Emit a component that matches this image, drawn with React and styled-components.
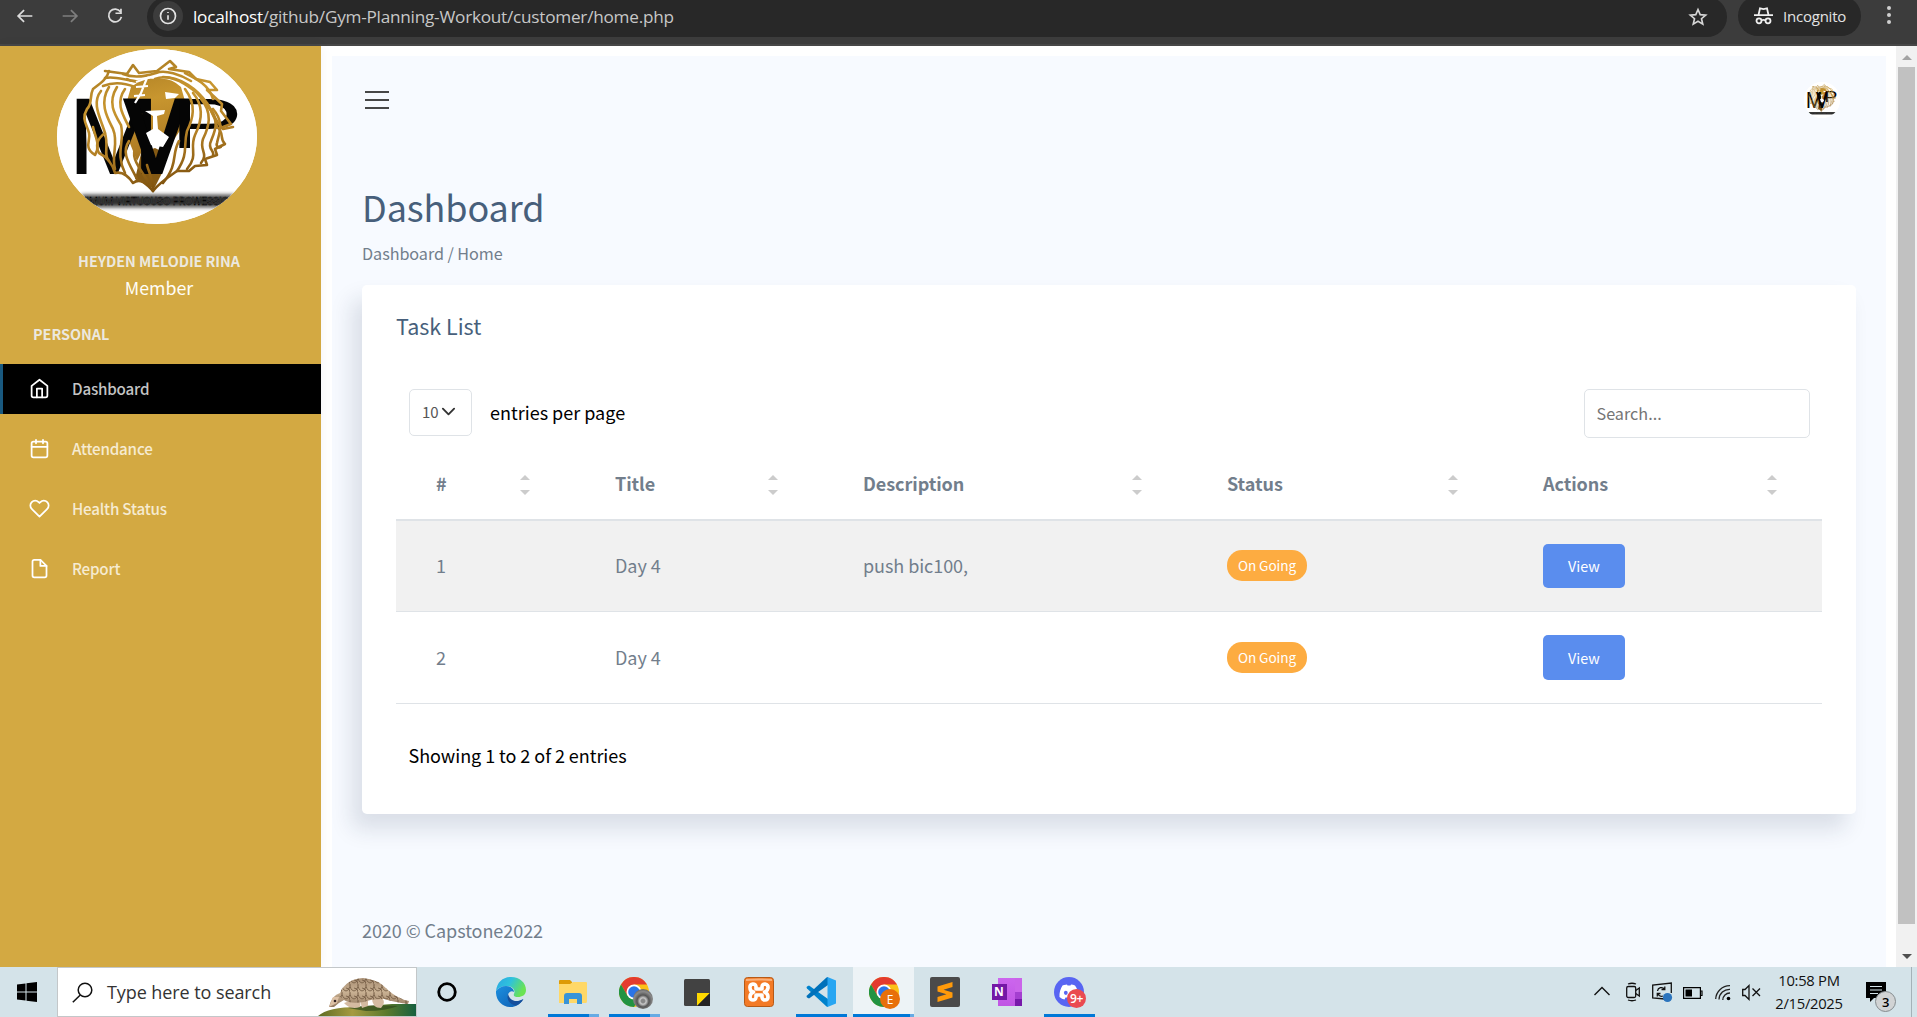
import React from "react";
import styled, { createGlobalStyle } from "styled-components";

const GlobalStyle = createGlobalStyle`
  *, *::before, *::after { box-sizing: border-box; }
  html, body { margin: 0; padding: 0; }
  body {
    width: 1917px;
    height: 1017px;
    overflow: hidden;
    background: #fff;
    font-family: "Noto Sans CJK SC", "Noto Sans", sans-serif;
    font-size: 18px;
  }
  svg { display: block; flex: none; }
`;

const SEGOE = `"Open Sans", "Noto Sans", sans-serif`;

const Screen = styled.div`
  width: 1917px;
  height: 1017px;
  display: flex;
  flex-direction: column;
`;

/* ---------- Browser bar ---------- */

const BrowserBar = styled.header`
  flex: none;
  height: 46px;
  background: #3c3c3c;
  border-bottom: 2px solid #474747;
  display: flex;
  align-items: flex-start;
  overflow: hidden;
  color: #e3e3e3;
  font-family: ${SEGOE};
`;

const NavButtons = styled.div`
  width: 147px;
  height: 32px;
  padding-left: 14px;
  display: flex;
  align-items: center;
  gap: 23px;
`;

const AddressBar = styled.div`
  width: 1580px;
  height: 40px;
  margin-top: -3px;
  padding: 0 18px 0 6px;
  border-radius: 20px;
  background: #282828;
  display: flex;
  align-items: center;
`;

const InfoChip = styled.div`
  width: 30px;
  height: 30px;
  border-radius: 15px;
  background: #3c3c3c;
  display: flex;
  align-items: center;
  justify-content: center;
  margin: -2px 10px 0 0;
`;

const Url = styled.div`
  flex: 1;
  font-size: 17.2px;
  line-height: 36px;
  letter-spacing: -0.24px;
  color: #c7c7c7;
  white-space: nowrap;
  span { color: #fff; }
`;

const IncognitoPill = styled.div`
  width: 123px;
  height: 40px;
  margin: -4px 0 0 11px;
  padding: 0 0 0 16px;
  border-radius: 20px;
  background: #282828;
  display: flex;
  align-items: center;
  gap: 10px;
  font-size: 15px;
  letter-spacing: -0.22px;
`;

const MenuDots = styled.div`
  margin: 6px 0 0 26px;
  display: flex;
  flex-direction: column;
  gap: 3px;
  i { width: 4px; height: 4px; border-radius: 2px; background: #d0d0d0; }
`;

/* ---------- Page shell ---------- */

const Viewport = styled.div`
  flex: none;
  height: 921px;
  display: flex;
`;

const Sidebar = styled.aside`
  width: 321px;
  background: #d3a942;
  display: flex;
  flex-direction: column;
  align-items: center;
  padding-top: 3px;
  box-shadow: 0 0 12px rgba(40, 40, 60, 0.05);
`;

const LogoFrame = styled.div`
  width: ${(p) => p.$w}px;
  height: ${(p) => p.$h}px;
  border-radius: 50%;
  overflow: hidden;
  background: #fff;
  flex: none;
  margin-left: ${(p) => p.$ml || 0}px;
`;

const UserName = styled.div`
  margin: 25px 0 0 -3px;
  font-size: 14.4px;
  line-height: 24px;
  font-weight: 700;
  letter-spacing: -0.06px;
  color: #ece8df;
`;

const UserRole = styled.div`
  margin: 0 0 0 -3px;
  font-size: 17.8px;
  line-height: 28px;
  color: #fffdf6;
`;

const MenuTitle = styled.div`
  align-self: stretch;
  padding-left: 33px;
  margin-top: 21px;
  font-size: 14.4px;
  line-height: 24px;
  font-weight: 700;
  color: #ece8df;
`;

const Menu = styled.nav`
  align-self: stretch;
  margin-top: 18px;
  display: flex;
  flex-direction: column;
  gap: 10px;
`;

const MenuItem = styled.a`
  height: 50px;
  display: flex;
  align-items: center;
  gap: 22px;
  padding-left: 26px;
  border-left: 3px solid ${(p) => (p.$active ? "#19597f" : "transparent")};
  background: ${(p) => (p.$active ? "#000" : "transparent")};
  color: ${(p) => (p.$active ? "#c4c4c4" : "#f6ebd1")};
  font-size: 15.2px;
  font-weight: 500;
  letter-spacing: -0.2px;
  line-height: 24px;
  svg { color: #fff; margin-top: -1px; }
  span { margin-top: -2px; }
`;

const Main = styled.main`
  flex: 1;
  min-width: 0;
  padding: 10px 10px 0 11px;
`;

const Content = styled.div`
  height: 911px;
  background: #f7faff;
  display: flex;
  flex-direction: column;
  padding: 0 30px;
`;

const TopBar = styled.div`
  height: 87px;
  display: flex;
  align-items: center;
  justify-content: space-between;
  padding: 0 16px 0 3px;
`;

const Burger = styled.div`
  display: flex;
  flex-direction: column;
  gap: 6px;
  i { width: 24px; height: 2px; background: #474747; }
`;

const PageTitle = styled.h3`
  margin: 41px 0 0;
  font-size: 36px;
  line-height: 44px;
  font-weight: 400;
  letter-spacing: -0.1px;
  color: #475f7b;
`;

const Breadcrumb = styled.div`
  margin-top: 13px;
  font-size: 16.2px;
  line-height: 24px;
  letter-spacing: -0.06px;
  color: #727e8c;
`;

const Card = styled.section`
  margin-top: 20px;
  height: 529px;
  padding: 24px 34px 0;
  background: #fff;
  border-radius: 5px;
  box-shadow: -10px 15px 22px 0 rgba(25, 42, 70, 0.13);
`;

const CardTitle = styled.h4`
  margin: 0;
  font-size: 21.5px;
  line-height: 34px;
  font-weight: 400;
  color: #475f7b;
`;

const TableTools = styled.div`
  margin-top: 46px;
  height: 50px;
  padding: 0 12px 0 13px;
  display: flex;
  justify-content: space-between;
  align-items: flex-start;
`;

const PerPage = styled.label`
  display: flex;
  gap: 18px;
  line-height: 47px;
  color: #000;
`;

const SelectBox = styled.div`
  width: 63px;
  height: 47px;
  border: 1px solid #dfe3e7;
  border-radius: 5px;
  padding: 0 0 2px 12px;
  display: flex;
  align-items: center;
  gap: 2px;
  font-size: 15px;
  color: #555;
`;

const SearchInput = styled.input`
  width: 226px;
  height: 49px;
  border: 1px solid #dfe3e7;
  border-radius: 5px;
  padding: 0 12px 2px 11.5px;
  font: 16.2px "Noto Sans CJK SC", "Noto Sans", sans-serif;
  background: #fff;
  &::placeholder { color: #757575; opacity: 1; }
`;

const Row = styled.div`
  display: grid;
  grid-template-columns: 179px 248px 364px 316px 319px;
  align-items: center;
  height: ${(p) => p.$h}px;
  padding-top: ${(p) => (p.$head ? 8 : 0)}px;
  background: ${(p) => (p.$striped ? "#f1f1f1" : "transparent")};
  border-bottom: ${(p) => (p.$head ? 2 : 1)}px solid #dfe3e7;
  color: #727e8c;
  font-weight: ${(p) => (p.$head ? 700 : 400)};
`;

const Cell = styled.div`
  height: ${(p) => (p.$head ? 28 : 45)}px;
  padding: 0 45px 0 40px;
  display: flex;
  align-items: ${(p) => (p.$head ? "center" : "flex-start")};
  justify-content: space-between;
  line-height: ${(p) => (p.$head ? 28 : p.$line || 43)}px;
  letter-spacing: -0.06px;
`;

const Sorter = styled.span`
  display: flex;
  flex-direction: column;
  gap: 10px;
  margin: 3px 0 0 0;
  &::before, &::after {
    content: "";
    border: 5px solid transparent;
    border-top-width: 0;
    border-bottom: 5px solid #ccc;
  }
  &::after {
    border-bottom-width: 0;
    border-top: 5px solid #ccc;
  }
`;

const Badge = styled.span`
  width: 80px;
  height: 31px;
  margin-top: ${(p) => (p.$first ? 6 : 7)}px;
  border-radius: 15px;
  background: #fdac41;
  color: #fff;
  font-size: 13.6px;
  line-height: 31px;
  text-align: center;
`;

const ViewButton = styled.button`
  width: 82px;
  height: ${(p) => (p.$first ? 44 : 45)}px;
  border: 0;
  border-radius: 5px;
  background: #5a8dee;
  color: #fff;
  font: 14.4px "Noto Sans CJK SC", "Noto Sans", sans-serif;
  padding: 0;
`;

const TableInfo = styled.div`
  padding: 37px 0 0 12.5px;
  line-height: 28px;
  letter-spacing: -0.05px;
  color: #000;
`;

const Footer = styled.footer`
  margin-top: 102px;
  line-height: 28px;
  letter-spacing: -0.06px;
  color: #727e8c;
`;

const Scrollbar = styled.div`
  width: 21px;
  background: #f1f1f1;
  display: flex;
  flex-direction: column;
  align-items: center;
  justify-content: space-between;
  padding: 9px 0 8px;
`;

const ScrollArrow = styled.i`
  border: 5px solid transparent;
  ${(p) => (p.$up
    ? "border-top: 0; border-bottom: 5px solid #a3a3a3;"
    : "border-bottom: 0; border-top: 5px solid #505050;")}
`;

const Thumb = styled.div`
  width: 17px;
  height: 857px;
  margin: 7px 0 auto;
  background: #c1c1c1;
`;

/* ---------- Taskbar ---------- */

const Taskbar = styled.footer`
  flex: none;
  height: 50px;
  background: #d4e3e9;
  display: flex;
  font-family: ${SEGOE};
  color: #111;
`;

const StartButton = styled.div`
  width: 57px;
  padding: 15px 0 0 17px;
`;

const SearchBox = styled.div`
  width: 360px;
  height: 50px;
  background: #fff;
  border: 1px solid #c3c7c9;
  display: flex;
  align-items: center;
  padding-left: 14px;
  gap: 14px;
  font-size: 18px;
  letter-spacing: -0.08px;
  color: #333;
  white-space: nowrap;
  overflow: hidden;
  > :last-child { margin-left: auto; }
`;

const SearchLabel = styled.span`
  width: 168px;
`;

const Apps = styled.div`
  display: flex;
  padding-left: 3px;
`;

const AppSlot = styled.div`
  width: ${(p) => p.$w || 62}px;
  height: 50px;
  position: relative;
  display: flex;
  align-items: center;
  justify-content: center;
  background: ${(p) => (p.$active ? "#edf3f6" : "transparent")};
`;

const Underline = styled.i`
  position: absolute;
  left: 50%;
  bottom: 0;
  width: 51px;
  height: 3px;
  margin-left: -25px;
  background: ${(p) => (p.$stacked
    ? "linear-gradient(90deg, #0078d7 41px, #66abe4 41px)"
    : "#0078d7")};
  ${(p) => p.$full && "left: 0; margin: 0; width: 61px; background: linear-gradient(90deg, #0078d7 57px, #66abe4 57px);"}
`;

const RoundBadge = styled.span`
  position: absolute;
  left: ${(p) => p.$x}px;
  top: ${(p) => p.$y}px;
  width: ${(p) => p.$s}px;
  height: ${(p) => p.$s}px;
  border-radius: 50%;
  background: ${(p) => p.$bg};
  border: ${(p) => p.$border || "0"};
  color: ${(p) => p.$color || "#fff"};
  font-size: ${(p) => p.$fs || 11}px;
  font-weight: ${(p) => p.$fw || 400};
  letter-spacing: -0.4px;
  display: flex;
  align-items: center;
  justify-content: center;
`;

const Tray = styled.div`
  margin-left: auto;
  display: flex;
  align-items: center;
`;

const Clock = styled.div`
  width: 80px;
  margin: 0 0 0 8px;
  font-size: 14.8px;
  line-height: 23px;
  letter-spacing: -0.3px;
  text-align: center;
  white-space: nowrap;
`;

const Notices = styled.div`
  position: relative;
  width: 63px;
  height: 50px;
  padding: 15px 0 0 17px;
  border-right: 1px solid #a4b2b8;
  margin-right: 5px;
`;

/* ---------- Drawings ---------- */

const STRANDS = [
  "M52 22C50 30 44 34 36 40C32 48 36 54 30 60C24 70 30 76 32 84C34 92 26 98 38 106C44 96 38 88 36 78",
  "M48 29C60 26 72 34 92 33",
  "M46 37C58 32 68 34 78 38",
  "M48 22L70 25L76 16L82 24L100 22L113 12L119 18L112 20L132 23L139 30L153 33L160 41L150 41L165 55L164 62L174 75L166 78",
  "M66 25C78 30 90 27 99 24C108 20 124 26 134 32",
  "M70 30C76 34 84 32 94 31",
  "M98 30C112 24 128 34 140 44C150 54 158 66 160 78",
  "M106 28C124 28 140 40 150 54C156 64 158 72 166 80L176 78",
  "M128 24C140 30 152 36 156 50",
  "M44 42C34 54 44 70 48 84C52 98 46 106 52 112",
  "M52 38C42 54 50 68 56 80C62 94 54 106 58 120",
  "M60 38C50 54 58 66 64 76C68 92 58 104 68 124",
  "M68 40C58 54 66 66 72 78",
  "M48 84C40 90 38 96 42 104C50 108 56 116 58 124C66 122 72 128 76 134C84 128 90 136 96 142",
  "M72 92C64 104 72 114 80 130",
  "M80 96C72 108 82 118 92 134",
  "M128 40C140 56 136 70 130 82C126 98 132 104 120 122",
  "M136 44C148 58 144 74 138 86C132 100 142 106 130 120",
  "M144 50C156 64 152 78 146 90C142 102 152 104 144 114",
  "M150 56C164 70 158 82 154 92C150 100 158 102 156 106",
  "M156 60C168 74 162 84 160 94C158 98 164 100 164 97",
  "M160 78C168 84 162 90 168 95L158 100L160 106L148 110L150 116L138 117L132 122L120 122C112 128 104 132 96 142",
  "M122 92C114 106 122 114 106 134",
  "M90 116C92 124 96 130 96 140",
];

function LionLogo({ w, h }) {
  return (
    <svg width={w} height={h} viewBox="0 0 200 175" preserveAspectRatio="none">
      <defs>
        <linearGradient id="mane" gradientUnits="userSpaceOnUse" x1="60" y1="10" x2="90" y2="140">
          <stop offset="0" stopColor="#a87a22" />
          <stop offset="0.35" stopColor="#c8962f" />
          <stop offset="0.7" stopColor="#b07d24" />
          <stop offset="1" stopColor="#80530e" />
        </linearGradient>
        <filter id="soft" x="-10%" y="-50%" width="120%" height="200%">
          <feGaussianBlur stdDeviation="2" />
        </filter>
      </defs>
      <rect width="200" height="175" fill="#fff" />
      <path fill="url(#mane)" d="M74 38Q86 28 100 30Q114 28 124 38L128 52L122 66L124 80L116 92L114 86L110 90L108 84L88 84L86 100L80 112L72 92L76 76L70 52Z" />
      <path fill="#fff" d="M108 43L122 45L118 49L109 50Z" />
      <path fill="#855a14" d="M86 96L92 101L98 99L106 103L108 98L106 122L97 140L78 130Z" />
      <g fill="#050505" fontFamily="Roboto, sans-serif">
        <text y="125" x="11 65" fontSize="105" fontWeight="400">
          M<tspan fontWeight="500">V</tspan>
        </text>
        <text transform="translate(113 99) scale(1.64 1)" fontSize="69" fontWeight="400">P</text>
      </g>
      <path fill="#fff" d="M88 62L108 61L107 65L100 67L101 80L112 88L106 98L94 96L89 84L96 80L96 67Z" />
      <g fill="none" stroke="url(#mane)" strokeWidth="2.6" strokeLinejoin="round" strokeLinecap="round">
        {STRANDS.map((d) => (
          <path key={d} d={d} />
        ))}
      </g>
      <path fill="none" stroke="#fff" strokeWidth="2.2" d="M79 33L90 29L84 44L78 54M79 38L91 37M77 47L88 46" />
      <rect x="24" y="146" width="156" height="12" fill="#111" opacity="0.85" filter="url(#soft)" />
      <text x="101" y="156" fill="#808080" stroke="#0a0a0a" strokeWidth="0.6" fontSize="11.5" textAnchor="middle" textLength="156" lengthAdjust="spacingAndGlyphs" fontFamily="Roboto, sans-serif">
        XIMUM VIRTUOUSO PROWESSION
      </text>
    </svg>
  );
}

const Stroke = ({ size = 20, w = 2, children, box = 24, ...rest }) => (
  <svg width={size} height={size} viewBox={`0 0 ${box} ${box}`} fill="none" stroke="currentColor" strokeWidth={w} strokeLinecap="round" strokeLinejoin="round" {...rest}>
    {children}
  </svg>
);

const MENU = [
  { label: "Dashboard", active: true, icon: <><path d="M3 9l9-7 9 7v11a2 2 0 0 1-2 2H5a2 2 0 0 1-2-2z" /><path d="M9 22V12h6v10" /></> },
  { label: "Attendance", icon: <><rect x="3" y="4" width="18" height="18" rx="2" /><path d="M16 2v4M8 2v4M3 10h18" /></> },
  { label: "Health Status", icon: <path d="M20.84 4.61a5.5 5.5 0 0 0-7.78 0L12 5.67l-1.06-1.06a5.5 5.5 0 0 0-7.78 7.78l1.06 1.06L12 21.23l7.78-7.78 1.06-1.06a5.5 5.5 0 0 0 0-7.78z" /> },
  { label: "Report", icon: <><path d="M13 2H6a2 2 0 0 0-2 2v16a2 2 0 0 0 2 2h12a2 2 0 0 0 2-2V9z" /><path d="M13 2v7h7" /></> },
];

const COLUMNS = ["#", "Title", "Description", "Status", "Actions"];
const TASKS = [
  { id: 1, title: "Day 4", description: "push bic100,", status: "On Going" },
  { id: 2, title: "Day 4", description: "", status: "On Going" },
];

const Pangolin = () => (
  <svg width="98" height="48" viewBox="0 0 98 48">
    <defs>
      <linearGradient id="grass" x1="0" x2="1">
        <stop offset="0" stopColor="#5d6b22" />
        <stop offset="0.35" stopColor="#a59a40" />
        <stop offset="0.7" stopColor="#5b7a2c" />
        <stop offset="1" stopColor="#17603f" />
      </linearGradient>
      <linearGradient id="hide" x1="0" y1="0" x2="0" y2="1">
        <stop offset="0" stopColor="#a98f74" />
        <stop offset="0.5" stopColor="#c8b092" />
        <stop offset="1" stopColor="#957a60" />
      </linearGradient>
      <pattern id="scales" width="8" height="8" patternUnits="userSpaceOnUse">
        <path d="M0 0Q0 6 4 7Q8 6 8 0M-4 4Q-4 8 0 8M4 4Q8 4 8 8" fill="none" stroke="#6e573f" strokeWidth="0.8" />
      </pattern>
    </defs>
    <path d="M0 48Q10 39 40 39Q62 37 74 36L98 36V48Z" fill="url(#grass)" />
    <path d="M30 40Q50 36 80 38Q68 43 48 43Z" fill="#2e4a1c" opacity="0.7" />
    <path d="M26 35Q32 42 42 39Q44 33 38 31ZM54 30Q54 40 63 40Q70 32 60 28ZM42 32L44 40L50 38L50 30Z" fill="#d5bba1" />
    <path d="M11 39Q14 27 22 25Q28 11 45 10Q60 11 70 22Q80 31 91 33L90 36Q76 34 66 31Q52 31 46 34Q32 36 26 32Q20 35 16 39Z" fill="url(#hide)" />
    <path d="M20 27Q28 11 45 10Q60 11 70 22Q80 31 91 33L90 36Q76 34 66 31Q52 31 46 34Q32 36 26 32Z" fill="url(#scales)" />
    <path d="M11 39L15 29L21 29L19 35Z" fill="#dcc0a4" />
    <circle cx="17" cy="33" r="1.3" fill="#322" />
  </svg>
);

const Edge = () => (
  <svg width="30" height="30" viewBox="0 0 30 30">
    <defs>
      <linearGradient id="edgeTop" x1="0" y1="0" x2="1" y2="0.4">
        <stop offset="0" stopColor="#2aa6e4" />
        <stop offset="0.5" stopColor="#2fc2dc" />
        <stop offset="1" stopColor="#6ae352" />
      </linearGradient>
      <linearGradient id="edgeLow" x1="0" y1="0" x2="1" y2="1">
        <stop offset="0" stopColor="#1c90e0" />
        <stop offset="1" stopColor="#0d5cb0" />
      </linearGradient>
    </defs>
    <path d="M0 14C1 5 7 0 15 0C24 0 30 6 30 13C30 18 26 20 22 20C19 20 17 19 18 17C20 13 16 9 11 9C6 9 2 11 0 14Z" fill="url(#edgeTop)" />
    <path d="M0 14C2 11 6 9 10 9C15 9 18 12 18 15C15 13 11 16 12 20C13 25 20 27 27 22C24 28 19 30 15 30C6 30 -0.500 23 0 14Z" fill="url(#edgeLow)" />
    <path d="M12 17C10 22 14 28 20 28.500C23 27.500 26 25 27.500 22C20 26 14 24 12 17Z" fill="#154f9c" />
  </svg>
);

const Chrome = () => (
  <svg width="30" height="30" viewBox="0 0 30 30">
    <circle cx="15" cy="15" r="15" fill="#fbc116" />
    <path d="M2 7.500A15 15 0 0 1 28 7.500H15L8.500 18.700Z" fill="#e33b2e" />
    <path d="M2 7.500A15 15 0 0 0 15 30L21.500 18.700L8.500 18.700Z" fill="#229342" />
    <circle cx="15" cy="15" r="7.500" fill="#fff" />
    <circle cx="15" cy="15" r="5.800" fill="#2a74e8" />
  </svg>
);

const Explorer = () => (
  <svg width="28" height="26" viewBox="0 0 28 26">
    <path d="M0 2Q0 1 1 1H11L13 3V7H0Z" fill="#dd9b05" />
    <path d="M0 5H11L14 3H27Q28 3 28 4V22Q28 24 27 24H0Z" fill="#ffd867" />
    <path d="M5 25V17Q5 14 8 14H20Q23 14 23 17V25H18V20H10V25Z" fill="#3894d8" />
  </svg>
);

const StickyNotes = () => (
  <svg width="26" height="27" viewBox="0 0 26 27">
    <rect width="26" height="27" rx="1.500" fill="#424242" />
    <path d="M13 14H26L13 27Z" fill="#ffd900" />
    <path d="M26 14V27H13Z" fill="#242424" />
  </svg>
);

const Xampp = () => (
  <svg width="30" height="30" viewBox="0 0 30 30">
    <rect x="0.500" y="0.500" width="29" height="29" rx="3" fill="#f37a26" stroke="#b65a17" />
    <path d="M2 3Q14 2 28 3" stroke="#f9b07a" strokeWidth="2" fill="none" />
    <g fill="none" stroke="#fff" strokeWidth="3.600" strokeLinejoin="round">
      <path d="M15 12H18V9.500Q18.500 7 21 7Q24.500 7.500 24 11Q23 14.500 20.500 15Q24 16.500 24 20Q24 23 21 23Q18.500 23 18 20.500V18H12V20.500Q11.500 23 9 23Q6 23 6 20Q6 16.500 9.500 15Q6 14.500 6 11Q5.500 7.500 9 7Q11.500 7 12 9.500V12H15" />
    </g>
  </svg>
);

const VsCode = () => (
  <svg width="30" height="30" viewBox="0 0 30 30">
    <path d="M1 9.500L3 8.500L22 22V30L20.500 29.500L1 11.500Q0 10.500 1 9.500Z" fill="#0082cc" />
    <path d="M1 20.500L3 21.500L22 8V0L20.500 0.500L1 18.500Q0 19.500 1 20.500Z" fill="#0071ba" />
    <path d="M21.500 0L30 3.500V26.500L21.500 30Z" fill="#28a6f2" />
  </svg>
);

const Sublime = () => (
  <svg width="30" height="30" viewBox="0 0 30 30">
    <rect width="30" height="30" rx="2" fill="#4a4a4a" />
    <path d="M7.500 9.500L22.500 5V10L13.500 12.800L22.500 15.500V20.500L7.500 25V20L16.500 17.200L7.500 14.500Z" fill="#ff9a0a" />
  </svg>
);

const OneNoteTile = styled.div`
  position: relative;
  width: 30px;
  height: 28px;
  background: linear-gradient(180deg, #ca64ea 50%, #a43fd0 50%, #a43fd0 75%, #7719aa 75%) right / 7px 100% no-repeat,
    linear-gradient(#cc66ee, #c055e4) right / 24px 100% no-repeat;
  b {
    position: absolute;
    left: 0;
    top: 6px;
    width: 15px;
    height: 16px;
    background: #7418a5;
    color: #fff;
    font-size: 12px;
    line-height: 16px;
    text-align: center;
  }
`;

const Discord = () => (
  <svg width="30" height="30" viewBox="0 0 30 30">
    <circle cx="15" cy="15" r="15" fill="#5865f2" />
    <path d="M10 8Q12 7.500 13 7.500L13.500 8.500H16.500L17 7.500Q19 7.500 21 8.500Q25 14 24.500 20Q22 22 19.500 22.500L18.500 20.500H11.500L10.500 22.500Q8 22 5.500 20Q5 14 8.500 8.500Z" fill="#fff" />
    <ellipse cx="11.800" cy="15.800" rx="1.900" ry="2.100" fill="#5865f2" />
    <ellipse cx="18.200" cy="15.800" rx="1.900" ry="2.100" fill="#5865f2" />
  </svg>
);

function BrowserChrome() {
  return (
    <BrowserBar>
      <NavButtons>
        <Stroke size={22} w={1.9} color="#dcdcdc"><path d="M20 12H5M11 5.500L4.500 12l6.500 6.500" strokeLinecap="butt" strokeLinejoin="miter" /></Stroke>
        <Stroke size={22} w={1.9} color="#7e7e7e"><path d="M4 12h15M13 5.500l6.500 6.500-6.500 6.500" strokeLinecap="butt" strokeLinejoin="miter" /></Stroke>
        <Stroke size={22} w={1.9} color="#dcdcdc"><path d="M18 7.500A7 7 0 1 0 19 13M18.500 4v5h-6" strokeLinecap="butt" strokeLinejoin="miter" /></Stroke>
      </NavButtons>
      <AddressBar>
        <InfoChip>
          <Stroke size={20} w={2} color="#e3e3e3"><circle cx="12" cy="12" r="9" /><path d="M12 11v5.500M12 7.200v1.300" strokeLinecap="butt" /></Stroke>
        </InfoChip>
        <Url><span>localhost</span>/github/Gym-Planning-Workout/customer/home.php</Url>
        <Stroke size={22} w={1.8} color="#d6d6d6"><path strokeLinejoin="miter" d="M12 3.800l2.400 5.600 6 .500-4.600 4 1.400 5.900L12 16.700l-5.200 3.100 1.400-5.900-4.600-4 6-.500z" /></Stroke>
      </AddressBar>
      <IncognitoPill>
        <svg width="19" height="18" viewBox="0 0 19 18" fill="none" stroke="#f0f0f0" strokeWidth="1.800">
          <path d="M0 8.200h19M4.500 8L6 1.400l3.500.8 3.500-.8L14.500 8" />
          <circle cx="5" cy="13.800" r="2.500" />
          <circle cx="14" cy="13.800" r="2.500" />
          <path d="M7.500 13.300q2-1 4 0" />
        </svg>
        Incognito
      </IncognitoPill>
      <MenuDots><i /><i /><i /></MenuDots>
    </BrowserBar>
  );
}

function SideMenu() {
  return (
    <Sidebar>
      <LogoFrame $w={200} $h={175} $ml={-7}><LionLogo w={200} h={175} /></LogoFrame>
      <UserName>HEYDEN MELODIE RINA</UserName>
      <UserRole>Member</UserRole>
      <MenuTitle>PERSONAL</MenuTitle>
      <Menu>
        {MENU.map((m) => (
          <MenuItem key={m.label} $active={m.active}>
            <Stroke size={21}>{m.icon}</Stroke>
            <span>{m.label}</span>
          </MenuItem>
        ))}
      </Menu>
    </Sidebar>
  );
}

function TaskTable() {
  return (
    <Card>
      <CardTitle>Task List</CardTitle>
      <TableTools>
        <PerPage>
          <SelectBox>
            10
            <Stroke size={15} w={2} box={16} color="#333"><path d="M2 5l6 6 6-6" /></Stroke>
          </SelectBox>
          entries per page
        </PerPage>
        <SearchInput placeholder="Search..." />
      </TableTools>
      <Row $head $h={82}>
        {COLUMNS.map((c) => (
          <Cell key={c} $head>{c}<Sorter /></Cell>
        ))}
      </Row>
      {TASKS.map((t, i) => {
        const line = i === 0 ? 43 : 45;
        return (
          <Row key={t.id} $h={i === 0 ? 91 : 92} $striped={i === 0}>
            <Cell $line={line}>{t.id}</Cell>
            <Cell $line={line}>{t.title}</Cell>
            <Cell $line={line}>{t.description}</Cell>
            <Cell><Badge $first={i === 0}>{t.status}</Badge></Cell>
            <Cell><ViewButton $first={i === 0}>View</ViewButton></Cell>
          </Row>
        );
      })}
      <TableInfo>Showing 1 to 2 of 2 entries</TableInfo>
    </Card>
  );
}

function WindowsTaskbar() {
  return (
    <Taskbar>
      <StartButton>
        <svg width="20" height="20" viewBox="0 0 20 20"><path fill="#000" d="M0 2.500L8.500 1.500V9.500H0ZM9.500 1.300L20 0V9.500H9.500ZM0 10.500H8.500V18.500L0 17.500ZM9.500 10.500H20V20L9.500 18.700Z" /></svg>
      </StartButton>
      <SearchBox>
        <svg width="21" height="21" viewBox="0 0 21 21" fill="none" stroke="#111" strokeWidth="1.500"><circle cx="13" cy="8" r="6.800" /><path d="M8.300 13L0.800 20.300" /></svg>
        <SearchLabel>Type here to search</SearchLabel>
        <Pangolin />
      </SearchBox>
      <Apps>
        <AppSlot $w={54}><svg width="20" height="20" viewBox="0 0 20 20"><circle cx="10" cy="10" r="8.300" fill="none" stroke="#000" strokeWidth="2.800" /></svg></AppSlot>
        <AppSlot $w={73}><Edge /></AppSlot>
        <AppSlot $w={51}><Explorer /><Underline $stacked /></AppSlot>
        <AppSlot $w={72}><Chrome /><RoundBadge $x={35} $y={22} $s={20} $bg="radial-gradient(circle at 50% 60%, #888 0 12%, #ccc 20%, #555 38%, #8a8a8a 60%, #333)" /><Underline $stacked /></AppSlot>
        <AppSlot $w={54}><StickyNotes /></AppSlot>
        <AppSlot $w={70}><Xampp /></AppSlot>
        <AppSlot $w={54}><VsCode /><Underline /></AppSlot>
        <AppSlot $w={5} />
        <AppSlot $w={61} $active><Chrome /><RoundBadge $x={27} $y={22} $s={20} $bg="#e8700a" $fs={12}>E</RoundBadge><Underline $full /></AppSlot>
        <AppSlot $w={61}><Sublime /></AppSlot>
        <AppSlot $w={63}><OneNoteTile><b>N</b></OneNoteTile></AppSlot>
        <AppSlot $w={62}><Discord /><RoundBadge $x={29} $y={22} $s={19} $bg="#ea4a50" $fs={12} $fw={600}>9+</RoundBadge><Underline /></AppSlot>
      </Apps>
      <Tray>
        <svg width="16" height="50" viewBox="0 0 16 50" fill="none" stroke="#111" strokeWidth="1.400"><path d="M0.500 28L8 20.500L15.500 28" /></svg>
        <svg width="42" height="50" viewBox="-16 0 42 50" fill="none" stroke="#111" strokeWidth="1.300"><rect x="0.700" y="19.500" width="9" height="11" rx="1.500" /><path d="M9.700 23.500L13.300 21V29L9.700 26.500M2 17Q6 15.500 10 17M2 33Q6 34.500 10 33" /></svg>
        <svg width="31" height="50" viewBox="0 0 31 50" fill="none" stroke="#111" strokeWidth="1.300"><path d="M13 32L0.700 31V18L19.300 16V26M5.500 24A4 4 0 0 1 12.500 22M12.800 19.500V22.500H9.500M5.300 29.500V26.500H8.500M6 27A4 4 0 0 0 11 29" /><circle cx="15.500" cy="30.500" r="4.600" fill="#2b74bd" stroke="none" /></svg>
        <svg width="32" height="50" viewBox="0 0 32 50"><path d="M0.600 20.600H17.400V31.400H0.600ZM17.500 24H19V28.500H17.500" fill="none" stroke="#000" strokeWidth="1.200" /><rect x="2.500" y="22.500" width="6.500" height="7" fill="#000" /></svg>
        <svg width="27" height="50" viewBox="0 0 27 50" fill="none" stroke="#222" strokeWidth="1.300"><path d="M0.700 32A14 14 0 0 1 15 18.700M4 32.500A10.500 10.500 0 0 1 15 22.300M7.800 33A7 7 0 0 1 15 26" /><circle cx="13.500" cy="31.500" r="1.800" fill="#000" stroke="none" /></svg>
        <svg width="19" height="50" viewBox="0 0 19 50" fill="none" stroke="#111" strokeWidth="1.300"><path d="M0.700 22.500V28.500H3L7 32.500V18.500L3 22.500ZM10.500 21.500L18 29M18 21.500L10.500 29" /></svg>
        <Clock>10:58 PM<br />2/15/2025</Clock>
        <Notices>
          <svg width="20" height="20" viewBox="0 0 20 20"><path fill="#000" d="M0 0H20V16H8L4 20V16H0Z" /><path d="M4 4.500H16M4 8H16M4 11.500H12" stroke="#d4e3e9" strokeWidth="1.200" /></svg>
          <RoundBadge $x={26} $y={24} $s={21} $bg="#d1d3d4" $color="#000" $fs={13} $fw={600} $border="1px solid #858b8e">3</RoundBadge>
        </Notices>
      </Tray>
    </Taskbar>
  );
}

export default function App() {
  return (
    <Screen>
      <GlobalStyle />
      <BrowserChrome />
      <Viewport>
        <SideMenu />
        <Main>
          <Content>
            <TopBar>
              <Burger><i /><i /><i /></Burger>
              <LogoFrame $w={36} $h={36}><LionLogo w={36} h={36} /></LogoFrame>
            </TopBar>
            <PageTitle>Dashboard</PageTitle>
            <Breadcrumb>Dashboard / Home</Breadcrumb>
            <TaskTable />
            <Footer>2020 © Capstone2022</Footer>
          </Content>
        </Main>
        <Scrollbar>
          <ScrollArrow $up />
          <Thumb />
          <ScrollArrow />
        </Scrollbar>
      </Viewport>
      <WindowsTaskbar />
    </Screen>
  );
}
